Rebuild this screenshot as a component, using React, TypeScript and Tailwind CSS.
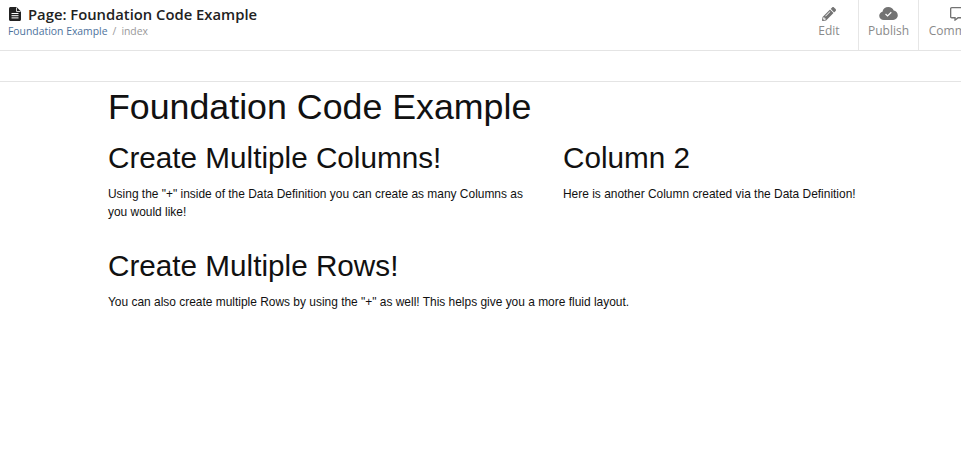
import { FaPencilAlt, FaRegCommentAlt } from 'react-icons/fa';

function FileIcon() {
  return (
    <svg width="12" height="14" viewBox="0 0 12 14" className="shrink-0">
      <path d="M1.500 0H7.500L12 4.500V12.500C12 13.300 11.300 14 10.500 14H1.500C.7 14 0 13.300 0 12.500V1.500C0 .7.7 0 1.500 0z" fill="#222" />
      <path d="M2.500 6.500H9.500M2.500 8.700H9.500M2.500 10.900H9.500" stroke="#fff" strokeWidth="1" />
      <path d="M7.500 .5V4.500H11.500" fill="none" stroke="#fff" strokeWidth=".8" />
    </svg>
  );
}

function CloudCheck() {
  return (
    <svg width="19" height="13" viewBox="0 0 20 14" fill="#737373">
      <path d="M5 14C2.2 14 0 12 0 9.4 0 7.2 1.500 5.500 3.500 5 4 2.200 6.500 0 9.800 0c2.700 0 4.900 1.500 5.800 3.800C18 4.200 20 6.300 20 9c0 2.800-2.200 5-5 5H5z" />
      <path d="M6.800 7.500l2.200 2.200 4-4" fill="none" stroke="#fff" strokeWidth="1.300" />
    </svg>
  );
}

function ToolbarButton({ label, icon, width, border }: { label: string; icon: React.ReactNode; width: string; border?: boolean }) {
  return (
    <div className={`flex flex-col items-center shrink-0 h-[50px] pt-[6px] ${width} ${border ? 'border-l border-[#e6e6e6]' : ''}`}>
      <div className="h-[15px] flex items-center justify-center">{icon}</div>
      <span className="text-[12px] leading-[18px] mt-[1px] text-[#8a8a8a] whitespace-nowrap">{label}</span>
    </div>
  );
}

export default function App() {
  return (
    <div className="w-[961px] h-[467px] overflow-hidden bg-white text-[#111] font-['Liberation_Sans',sans-serif]">
      {/* Top bar */}
      <div className="h-[51px] flex justify-between border-b border-[#e4e4e4] font-['Open_Sans',sans-serif]">
        <div className="pl-[9px] pt-[4px]">
          <div className="flex items-center gap-[7px] h-[20px]">
            <FileIcon />
            <span className="text-[14.800px] font-semibold leading-[20px] text-[#222]">Page: Foundation Code Example</span>
          </div>
          <div className="flex text-[10.400px] leading-[15px] ml-[-1px] whitespace-nowrap">
            <span className="text-[#4d729c]">Foundation Example</span>
            <span className="text-[#999] ml-[5px]">/</span>
            <span className="text-[#999] ml-[5px]">index</span>
          </div>
        </div>
        <div className="flex w-[161px] overflow-hidden">
          <ToolbarButton label="Edit" width="w-[58px]" icon={<FaPencilAlt size={14} color="#737373" />} />
          <ToolbarButton label="Publish" width="w-[60px]" border icon={<CloudCheck />} />
          <ToolbarButton label="Comment" width="w-[76px]" border icon={<FaRegCommentAlt size={14} color="#737373" />} />
        </div>
      </div>

      {/* Empty toolbar strip */}
      <div className="h-[31px] border-b border-[#e4e4e4]" />

      {/* Content */}
      <div className="pl-[108px]">
        <h1 className="text-[35.750px] leading-[50px]">Foundation Code Example</h1>
        <div className="flex mt-[5px]">
          <div className="w-[455px] pr-[30px]">
            <h2 className="text-[29.700px] leading-[42px]">Create Multiple Columns!</h2>
            <p className="text-[11.950px] leading-[18px] mt-[6px]">
              Using the "+" inside of the Data Definition you can create as many Columns as you would like!
            </p>
          </div>
          <div>
            <h2 className="text-[29.700px] leading-[42px]">Column 2</h2>
            <p className="text-[11.950px] leading-[18px] mt-[6px]">Here is another Column created via the Data Definition!</p>
          </div>
        </div>
        <h2 className="text-[29.700px] leading-[42px] mt-[24px]">Create Multiple Rows!</h2>
        <p className="text-[11.950px] leading-[18px] mt-[6px]">
          You can also create multiple Rows by using the "+" as well! This helps give you a more fluid layout.
        </p>
      </div>
    </div>
  );
}
